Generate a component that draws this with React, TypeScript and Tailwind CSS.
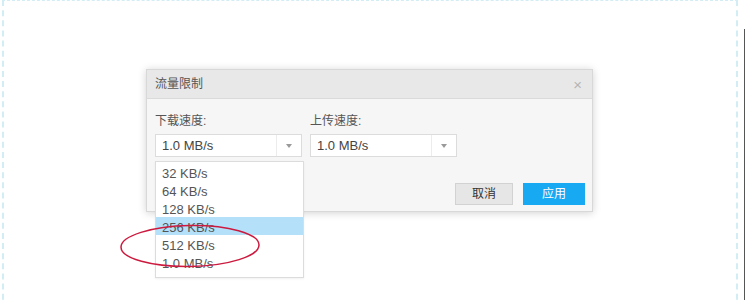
import React from "react";

const font = { fontFamily: '"Liberation Sans", "Noto Sans CJK SC", sans-serif' };

function Arrow() {
  return (
    <svg width="6" height="4" viewBox="0 0 6 4" className="block">
      <path d="M0 0 L6 0 L3 4 Z" fill="#9a9a9a" />
    </svg>
  );
}

function Select({ value, children }: { value: string; children?: React.ReactNode }) {
  return (
    <div className="relative w-[147px] h-[23px] bg-white border border-[#dcdcdc] flex items-stretch">
      <div className="flex-1 flex items-center pl-[6px] text-[13px] text-[#444]">{value}</div>
      <div className="w-[25px] border-l border-[#ececec] flex items-center justify-center">
        <Arrow />
      </div>
      {children}
    </div>
  );
}

export default function App() {
  const items = ["32 KB/s", "64 KB/s", "128 KB/s", "256 KB/s", "512 KB/s", "1.0 MB/s"];
  return (
    <div className="relative w-[746px] h-[300px] overflow-hidden bg-white flex" style={font}>
      <div className="ml-[2px] w-[736px] h-[320px] border-x-2 border-t border-dashed border-[#d3edf5] pl-[142px] pt-[68px]">
        <div className="w-[447px] bg-[#f6f6f6] border border-[#d8d8d8] shadow-[0_1px_8px_rgba(0,0,0,0.18)]">
          <div className="h-[29px] bg-[#e8e8e8] border-b border-[#dadada] flex items-center justify-between pl-[8px] pr-[10px]">
            <span className="text-[12px] text-[#555]">流量限制</span>
            <span className="text-[15px] leading-none text-[#b5b5b5]">×</span>
          </div>
          <div className="pl-[8px] pr-[7px] pt-[13px] pb-[6px]">
            <div className="flex gap-[8px]">
              <div className="flex flex-col">
                <div className="h-[18px] flex items-center text-[12px] text-[#555] mb-[4px]">下载速度:</div>
                <Select value="1.0 MB/s">
                  <div className="absolute left-[-1px] top-[26px] w-[149px] bg-white border border-[#dcdcdc] shadow-[0_1px_2px_rgba(0,0,0,0.06)] pt-[1px] pb-[6px] z-10">
                    {items.map((it) => (
                      <div
                        key={it}
                        className={`h-[18px] pt-[3px] leading-[16px] pl-[6px] text-[13px] text-[#555] ${it === "256 KB/s" ? "bg-[#b4e1f9]" : ""}`}
                      >
                        {it}
                      </div>
                    ))}
                  </div>
                </Select>
              </div>
              <div className="flex flex-col">
                <div className="h-[18px] flex items-center text-[12px] text-[#555] mb-[4px]">上传速度:</div>
                <Select value="1.0 MB/s" />
              </div>
            </div>
            <div className="flex justify-end gap-[10px] mt-[26px]">
              <button className="w-[58px] h-[22px] bg-[#e6e6e6] border border-[#d2d2d2] text-[12px] text-[#333]">取消</button>
              <button className="w-[62px] h-[22px] bg-[#17a9f2] text-[12px] text-white">应用</button>
            </div>
          </div>
        </div>
      </div>
      <div className="ml-[6px] mt-[29px] w-px h-[280px] bg-[#555]" />
      <svg className="absolute left-[118px] top-[222px] z-20" width="144" height="48" viewBox="0 0 144 48">
        <ellipse cx="72" cy="24" rx="69" ry="20.5" fill="none" stroke="#cc1a3f" strokeWidth="1.5" transform="rotate(-1 72 24)" />
      </svg>
    </div>
  );
}
